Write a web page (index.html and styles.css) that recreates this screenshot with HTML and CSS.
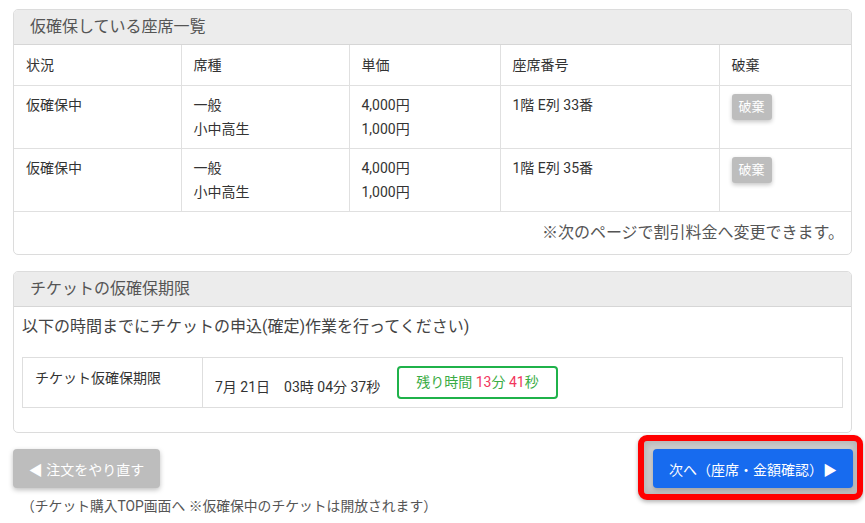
FILE: index.html
```html
<!DOCTYPE html>
<html lang="ja">
<head>
<meta charset="utf-8">
<title>仮確保している座席一覧</title>
<link rel="stylesheet" href="styles.css">
</head>
<body>
<div class="page">
  <section class="panel">
    <div class="panel-head">仮確保している座席一覧</div>
    <table class="seats">
      <colgroup>
        <col class="c1"><col class="c2"><col class="c3"><col class="c4"><col class="c5">
      </colgroup>
      <thead>
        <tr><th>状況</th><th>席種</th><th>単価</th><th>座席番号</th><th>破棄</th></tr>
      </thead>
      <tbody>
        <tr>
          <td>仮確保中</td>
          <td>一般<br>小中高生</td>
          <td>4,000円<br>1,000円</td>
          <td>1階 E列 33番</td>
          <td><button class="btn-discard">破棄</button></td>
        </tr>
        <tr>
          <td>仮確保中</td>
          <td>一般<br>小中高生</td>
          <td>4,000円<br>1,000円</td>
          <td>1階 E列 35番</td>
          <td><button class="btn-discard">破棄</button></td>
        </tr>
      </tbody>
    </table>
    <div class="seat-note">※次のページで割引料金へ変更できます。</div>
  </section>

  <section class="panel panel-limit">
    <div class="panel-head">チケットの仮確保期限</div>
    <div class="panel-body">
      <p class="lead">以下の時間までにチケットの申込(確定)作業を行ってください)</p>
      <table class="limit">
        <tr>
          <th>チケット仮確保期限</th>
          <td>
            <div class="limit-cell">
              <span class="date">7月 21日　03時 04分 37秒</span>
              <span class="remain">残り時間 <em>13</em>分 <em>41</em>秒</span>
            </div>
          </td>
        </tr>
      </table>
    </div>
  </section>

  <div class="actions">
    <button class="btn-back">◀ 注文をやり直す</button>
    <div class="next-wrap">
      <button class="btn-next">次へ（座席・金額確認）▶</button>
    </div>
  </div>
  <p class="back-note">（チケット購入TOP画面へ ※仮確保中のチケットは開放されます）</p>
</div>
</body>
</html>
```

FILE: styles.css
```css
html, body {
  margin: 0;
  padding: 0;
  background: #fff;
}
body {
  font-family: Roboto, "Noto Sans CJK JP", sans-serif;
  color: #333;
  font-size: 14px;
  line-height: 24px;
}
.page {
  padding: 9px 13px 0 13px;
}
.panel {
  border: 1px solid #dcdcdc;
  border-radius: 5px;
  overflow: hidden;
  background: #fff;
}
.panel-head {
  background: #ececec;
  border-bottom: 1px solid #d6d6d6;
  color: #555;
  font-size: 16px;
  line-height: 34px;
  height: 34px;
  padding-left: 16px;
}
.seats {
  width: 100%;
  border-collapse: collapse;
  table-layout: fixed;
}
.seats col.c1 { width: 167px; }
.seats col.c2 { width: 168px; }
.seats col.c3 { width: 151px; }
.seats col.c4 { width: 219px; }
.seats col.c5 { width: auto; }
.seats th, .seats td {
  text-align: left;
  vertical-align: top;
  font-weight: normal;
  border-bottom: 1px solid #e0e0e0;
  border-right: 1px solid #e0e0e0;
  padding: 7px 12px;
  color: #333;
}
.seats th {
  padding: 8px 12px;
}
.seats th:last-child, .seats td:last-child {
  border-right: none;
}
.btn-discard {
  font-family: inherit;
  font-size: 13px;
  line-height: 26px;
  height: 26px;
  width: 40px;
  padding: 0;
  margin-top: 1px;
  border: none;
  border-radius: 3px;
  background: #bdbdbd;
  color: #fff;
  box-shadow: 0 2px 4px rgba(0, 0, 0, 0.22);
}
.seat-note {
  text-align: right;
  font-size: 16px;
  color: #555;
  padding: 9px 7px 9px 0;
}
.panel-limit {
  margin-top: 16px;
}
.panel-body {
  padding: 8px 8px 24px 8px;
}
.lead {
  margin: 0 0 18px 0;
  font-size: 16px;
  color: #444;
}
.limit {
  width: 100%;
  border-collapse: collapse;
  border: 1px solid #dedede;
}
.limit th {
  width: 155px;
  text-align: left;
  font-weight: normal;
  vertical-align: top;
  padding: 8px 12px;
  border-right: 1px solid #dedede;
  color: #333;
}
.limit td {
  padding: 8px 12px 8px 12px;
}
.limit-cell {
  display: flex;
  align-items: flex-end;
}
.date {
  color: #333;
  line-height: 24px;
}
.remain {
  margin-left: 17px;
  border: 2px solid #1fb24a;
  border-radius: 4px;
  color: #3aac45;
  line-height: 29px;
  padding: 0 17px;
}
.remain em {
  font-style: normal;
  color: #f2365c;
}
.actions {
  display: flex;
  justify-content: space-between;
  align-items: flex-start;
  margin-top: 16px;
}
.btn-back, .btn-next {
  font-family: inherit;
  font-size: 14px;
  height: 39px;
  border: none;
  border-radius: 4px;
  color: #fff;
  cursor: pointer;
}
.btn-back {
  width: 147px;
  background: #bdbdbd;
  box-shadow: 0 2px 5px rgba(0, 0, 0, 0.25);
}
.next-wrap {
  position: relative;
  margin-right: -1px;
}
.next-wrap::before {
  content: "";
  position: absolute;
  left: -15px;
  right: -10px;
  top: -14px;
  bottom: -12px;
  border: 6px solid #ff0000;
  border-radius: 9px;
  background: #cfcfcf;
  box-shadow: 0 2px 4px rgba(0, 0, 0, 0.3), inset 0 0 6px 3px rgba(0, 0, 0, 0.12);
}
.btn-next {
  position: relative;
  width: 200px;
  background: #176bef;
  box-shadow: 0 2px 4px rgba(0, 0, 0, 0.2);
}
.back-note {
  margin: 6px 0 0 8px;
  font-size: 13.8px;
  color: #555;
}
```
